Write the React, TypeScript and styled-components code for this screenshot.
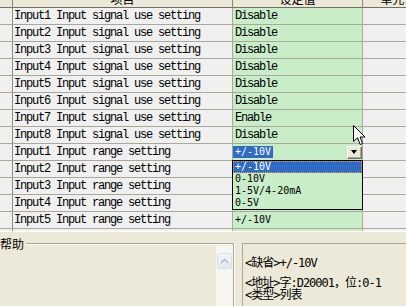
import React from 'react'
import styled, { createGlobalStyle } from 'styled-components'

type CellKind = 'stub' | 'name' | 'value' | 'unit'

type Row = {
  name: string
  value: string
  range?: boolean
  editing?: boolean
}

const signalValues = ['Disable', 'Disable', 'Disable', 'Disable', 'Disable', 'Disable', 'Enable', 'Disable']

// rows 2-4 of the range block sit under the open list, and the last row is scrolled
// almost out of view, so their texts are not drawn
const rows: Row[] = [
  ...signalValues.map((value, i) => ({ name: `Input${i + 1} Input signal use setting`, value })),
  { name: 'Input1 Input range setting', value: '+/-10V', range: true, editing: true },
  { name: 'Input2 Input range setting', value: '', range: true },
  { name: 'Input3 Input range setting', value: '', range: true },
  { name: 'Input4 Input range setting', value: '', range: true },
  { name: 'Input5 Input range setting', value: '+/-10V', range: true },
  { name: '', value: '', range: true },
]

const rangeOptions = ['+/-10V', '0-10V', '1-5V/4-20mA', '0-5V']

const GlobalStyle = createGlobalStyle`
  html, body {
    margin: 0;
    padding: 0;
    background: #ece9d8;
  }
`

const Screen = styled.div`
  width: 406px;
  height: 306px;
  overflow: hidden;
  display: flex;
  flex-direction: column;
  background: #ece9d8;
`

const TableView = styled.div`
  position: relative;
  flex: none;
  height: 231px;
  overflow: hidden;
`

const Grid = styled.div`
  display: grid;
  grid-template-columns: 13px 220px 130px 60px;
  grid-template-rows: 18px;
  grid-auto-rows: 17px;
  width: 423px;
  margin-top: -10px;
`

const HeadCell = styled.div`
  box-sizing: border-box;
  background: #ece9d8;
  border-right: 1px solid #8a877a;
  border-bottom: 1px solid #716f64;
  text-align: center;
  font: 12px/17px 'Noto Sans CJK SC', sans-serif;
  color: #000;
`

const Cell = styled.div<{ $kind: CellKind }>`
  box-sizing: border-box;
  border-right: 1px solid ${(p) => (p.$kind === 'stub' ? '#8f8c80' : '#aca899')};
  border-bottom: 1px solid #aca899;
  background: ${(p) => (p.$kind === 'value' ? '#c9edc9' : '#f0f0f0')};
  padding-left: ${(p) => (p.$kind === 'value' ? '2px' : '1px')};
  font: 12px/16px 'Liberation Mono', monospace;
  letter-spacing: -1.2px;
  color: #000;
  white-space: nowrap;
  overflow: hidden;
`

const RangeText = styled.span`
  font: 10px/16px 'DejaVu Sans Mono', monospace;
  letter-spacing: 0;
`

const Editor = styled.div`
  display: flex;
  align-items: center;
  justify-content: space-between;
  height: 100%;
  margin-left: -2px;
`

const Selection = styled.span`
  background: #316ac5;
  color: #fff;
  padding: 0 2px;
  font: 10px/12px 'DejaVu Sans Mono', monospace;
  letter-spacing: 0;
`

const DropButton = styled.span`
  box-sizing: border-box;
  display: flex;
  align-items: center;
  justify-content: center;
  width: 15px;
  height: 13px;
  background: #ece9d8;
  border: 1px solid;
  border-color: #fff #716f64 #716f64 #fff;
  box-shadow: inset -1px -1px 0 #aca899;

  &::after {
    content: '';
    border-left: 3px solid transparent;
    border-right: 3px solid transparent;
    border-top: 4px solid #000;
    margin-left: -1px;
  }
`

const DropList = styled.ul`
  position: absolute;
  left: 232px;
  top: 160px;
  width: 131px;
  box-sizing: border-box;
  margin: 0;
  padding: 0;
  list-style: none;
  border: 1px solid #000;
  background: #c9edc9;
`

const DropItem = styled.li<{ $selected?: boolean }>`
  height: 12px;
  padding-left: 2px;
  font: 10px/12px 'DejaVu Sans Mono', monospace;
  color: ${(p) => (p.$selected ? '#fff' : '#000')};
  background: ${(p) => (p.$selected ? '#316ac5' : 'transparent')};
  outline: ${(p) => (p.$selected ? '1px dotted #f0a23c' : 'none')};
  outline-offset: -1px;
`

const Pointer = styled.svg`
  position: absolute;
  left: 353px;
  top: 125px;
`

const HelpArea = styled.div`
  flex: 1;
  display: flex;
  gap: 8px;
  border-top: 1px solid #fff;
  min-height: 0;
`

const HelpGroup = styled.fieldset`
  box-sizing: border-box;
  width: 242px;
  min-width: 0;
  margin: 5px 0 0 -8px;
  padding: 0;
  border: 0;
  border-top: 1px solid #aca899;
  border-right: 1px solid #aca899;
  box-shadow: 1px 0 0 #fff, inset 0 1px 0 #fff;
  display: flex;
  justify-content: flex-end;
`

const HelpLegend = styled.legend`
  margin-left: 8px;
  padding: 0 2px 0 0;
  background: #ece9d8;
  font: 12px/13px 'Noto Sans CJK SC', sans-serif;
  color: #000;
`

const ScrollTrack = styled.div`
  width: 17px;
  margin-top: -4px;
  padding: 7px 0 0 1px;
  box-sizing: border-box;
  background: #f7f6f0;
`

const ScrollButton = styled.div`
  box-sizing: border-box;
  width: 15px;
  height: 16px;
  border: 1px solid #dadfe9;
  border-radius: 2px;
  background: linear-gradient(#f4f5f9, #e4e7ef);
  display: flex;
  align-items: center;
  justify-content: center;
`

const HelpText = styled.div`
  flex: 1;
  margin-top: 11px;
  border-top: 1px solid #aca899;
  border-left: 1px solid #aca899;
  padding: 13px 0 0 2px;
  font: 12px/12px 'DejaVu Sans Mono', 'Noto Sans CJK SC', monospace;
  letter-spacing: -1px;
  color: #000;
  white-space: nowrap;
`

const HelpLine = styled.div<{ $gap?: number }>`
  height: 12px;
  margin-bottom: ${(p) => p.$gap ?? 0}px;
`

const renderValue = (row: Row) => {
  if (row.editing) {
    return (
      <Editor>
        <Selection>{row.value}</Selection>
        <DropButton />
      </Editor>
    )
  }
  if (row.range) return row.value ? <RangeText>{row.value}</RangeText> : null
  return row.value
}

export default function App() {
  return (
    <Screen>
      <GlobalStyle />
      <TableView>
        <Grid>
          <HeadCell />
          <HeadCell>项目</HeadCell>
          <HeadCell>设定值</HeadCell>
          <HeadCell>单元</HeadCell>
          {rows.map((row, i) => (
            <React.Fragment key={i}>
              <Cell $kind="stub" />
              <Cell $kind="name">{row.name}</Cell>
              <Cell $kind="value">{renderValue(row)}</Cell>
              <Cell $kind="unit" />
            </React.Fragment>
          ))}
        </Grid>
        <DropList>
          {rangeOptions.map((opt, i) => (
            <DropItem key={opt} $selected={i === 0}>
              {opt}
            </DropItem>
          ))}
        </DropList>
        <Pointer width="13" height="22" viewBox="0 0 13 22">
          <path
            d="M0.5 0.5 L0.5 16.5 L4.5 12.8 L7.2 19.5 L9.6 18.5 L7 12 L12 12 Z"
            fill="#fff"
            stroke="#000"
            strokeWidth="1"
          />
        </Pointer>
      </TableView>
      <HelpArea>
        <HelpGroup>
          <HelpLegend>帮助</HelpLegend>
          <ScrollTrack>
            <ScrollButton>
              <svg width="9" height="6" viewBox="0 0 9 6">
                <path d="M1 5 L4.5 1.5 L8 5" fill="none" stroke="#b4bccf" strokeWidth="1.6" />
              </svg>
            </ScrollButton>
          </ScrollTrack>
        </HelpGroup>
        <HelpText>
          <HelpLine $gap={8}>&lt;缺省&gt;+/-10V</HelpLine>
          <HelpLine>&lt;地址&gt;字:D20001，位:0-1</HelpLine>
          <HelpLine>&lt;类型&gt;列表</HelpLine>
        </HelpText>
      </HelpArea>
    </Screen>
  )
}
